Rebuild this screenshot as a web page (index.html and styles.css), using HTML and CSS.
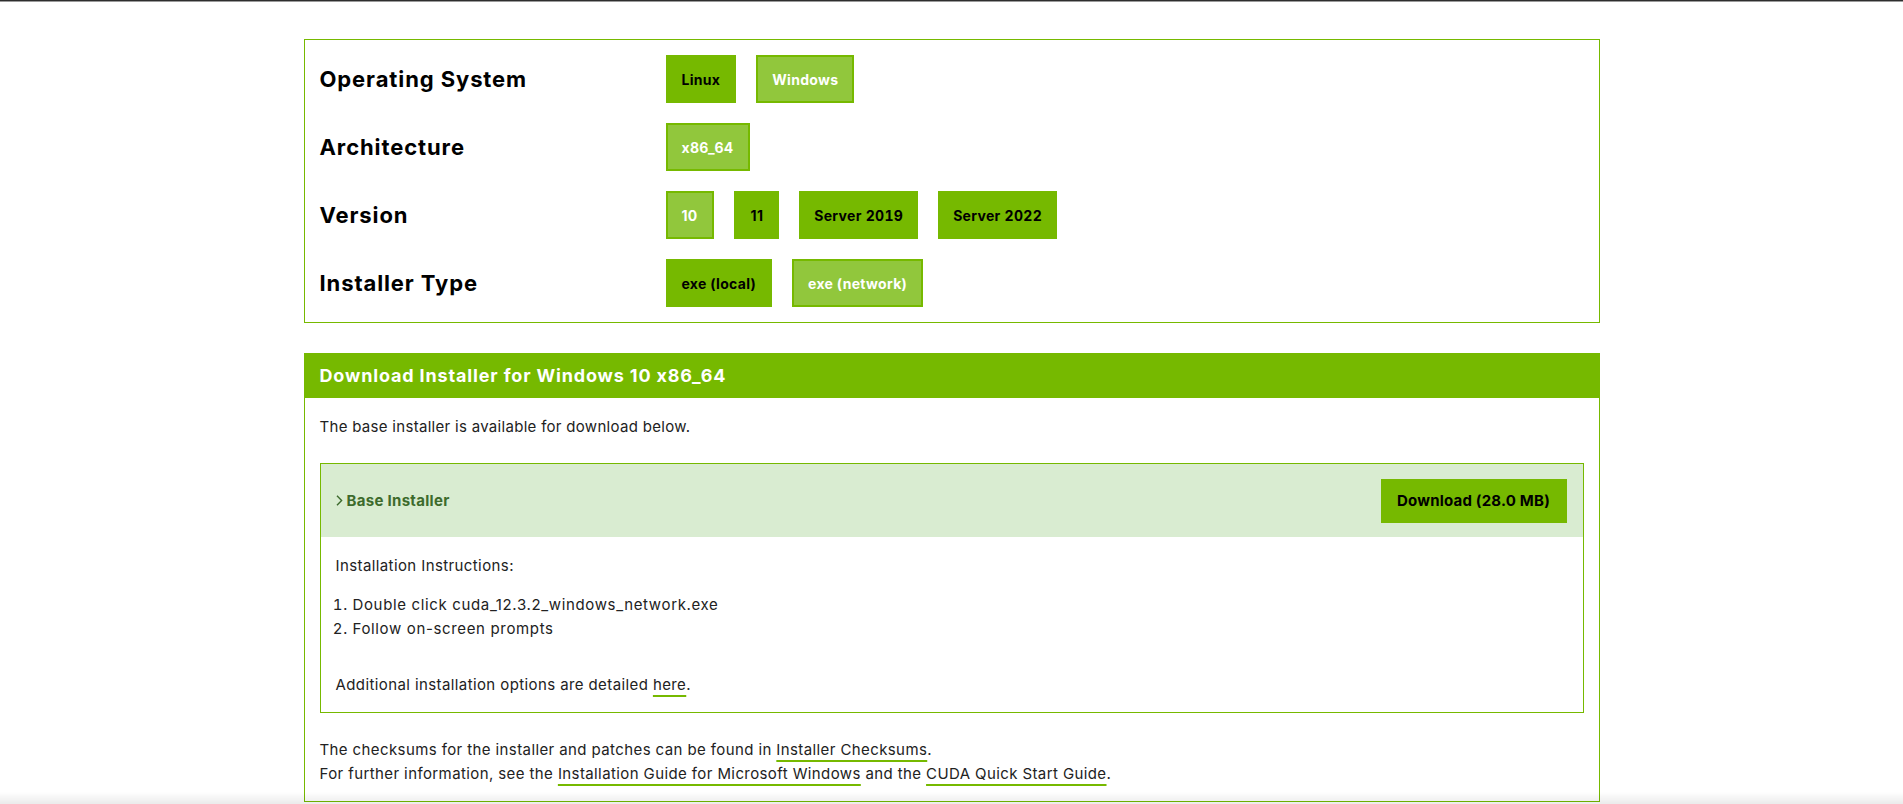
FILE: index.html
```html
<!DOCTYPE html>
<html lang="en">
<head>
<meta charset="utf-8">
<title>CUDA Toolkit Downloads</title>
<link rel="stylesheet" href="styles.css">
</head>
<body>
<div class="topbar"></div>
<main class="page">
  <section class="selector">
    <div class="sel-row">
      <div class="sel-label">Operating System</div>
      <div class="sel-opts">
        <button class="opt">Linux</button>
        <button class="opt active">Windows</button>
      </div>
    </div>
    <div class="sel-row">
      <div class="sel-label">Architecture</div>
      <div class="sel-opts">
        <button class="opt active">x86_64</button>
      </div>
    </div>
    <div class="sel-row">
      <div class="sel-label">Version</div>
      <div class="sel-opts">
        <button class="opt active">10</button>
        <button class="opt opt-11">11</button>
        <button class="opt opt-num">Server 2019</button>
        <button class="opt opt-num">Server 2022</button>
      </div>
    </div>
    <div class="sel-row">
      <div class="sel-label">Installer Type</div>
      <div class="sel-opts">
        <button class="opt">exe (local)</button>
        <button class="opt active">exe (network)</button>
      </div>
    </div>
  </section>

  <section class="download">
    <h2 class="dl-head">Download Installer for Windows 10 x86_64</h2>
    <div class="dl-body">
      <p class="dl-intro">The base installer is available for download below.</p>
      <div class="inst">
        <div class="inst-head">
          <span class="inst-title"><svg class="chev" width="7" height="11" viewBox="0 0 7 11"><path d="M1 0.8 L5.6 5.5 L1 10.2" fill="none" stroke="#3d6b2c" stroke-width="1.4"/></svg>Base Installer</span>
          <a class="dl-btn" href="#">Download (28.0 MB)</a>
        </div>
        <div class="inst-body">
          <p class="inst-label">Installation Instructions:</p>
          <ol class="steps">
            <li>Double click cuda_12.3.2_windows_network.exe</li>
            <li>Follow on-screen prompts</li>
          </ol>
          <p class="inst-more">Additional installation options are detailed <a class="lnk" href="#">here</a>.</p>
        </div>
      </div>
      <p class="notes">The checksums for the installer and patches can be found in <a class="lnk" href="#">Installer Checksums</a>.<br>For further information, see the <a class="lnk" href="#">Installation Guide for Microsoft Windows</a> and the <a class="lnk" href="#">CUDA Quick Start Guide</a>.</p>
    </div>
  </section>
</main>
<div class="bottom-shade"></div>
</body>
</html>
```

FILE: styles.css
```css
* { box-sizing: border-box; }

html, body {
  margin: 0;
  padding: 0;
  background: #ffffff;
  font-family: Inter, Roboto, "Liberation Sans", Arial, sans-serif;
  font-feature-settings: "calt" 0;
  color: #1a1a1a;
  overflow: hidden;
}

.topbar {
  height: 2px;
  background: #2e2e2e;
  border-bottom: 1px solid #9a9a9a;
}

.page {
  width: 1296px;
  margin: 37px auto 0;
}

.selector {
  border: 1px solid #76b900;
  padding: 15px 15px;
  display: flex;
  flex-direction: column;
  gap: 20px;
}

.sel-row {
  display: grid;
  grid-template-columns: 346px 1fr;
  align-items: center;
  height: 48px;
}

.sel-label {
  font-size: 22px;
  font-weight: 700;
  letter-spacing: 0.9px;
  color: #000;
}

.sel-opts {
  display: flex;
  gap: 20px;
}

.opt {
  height: 48px;
  padding: 0 14px;
  border: 2px solid #76b900;
  background: #76b900;
  color: #000;
  font-family: Inter, Roboto, "Liberation Sans", Arial, sans-serif;
  font-feature-settings: "calt" 0;
  font-size: 14px;
  font-weight: 700;
  letter-spacing: 0.3px;
  cursor: pointer;
  margin: 0;
}

.opt-11 {
  padding: 0 14px 0 15px;
}

.opt-num {
  font-feature-settings: "calt" 0, "tnum" 1;
  padding: 0 13px;
}

.opt.active {
  background: #91c73c;
  color: #fff;
}

.download {
  margin-top: 30px;
  border: 1px solid #76b900;
}

.dl-head {
  margin: 0;
  height: 44px;
  background: #76b900;
  color: #fff;
  font-size: 18px;
  font-weight: 700;
  letter-spacing: 0.85px;
  line-height: 44px;
  padding: 0 15px;
}

.dl-body {
  padding: 19px 15px 15px 15px;
}

.dl-intro {
  margin: 0 0 26px;
  font-size: 15px;
  letter-spacing: 0.3px;
  line-height: 20px;
  color: #222;
}

.inst {
  border: 1px solid #76b900;
}

.inst-head {
  background: #d9ecd1;
  height: 73px;
  display: flex;
  align-items: center;
  justify-content: space-between;
  padding: 0 16px 0 15px;
}

.inst-title {
  display: flex;
  align-items: center;
  gap: 4px;
  font-size: 15px;
  font-weight: 700;
  letter-spacing: 0.3px;
  color: #3d6b2c;
}

.chev { display: block; }

.dl-btn {
  display: flex;
  align-items: center;
  justify-content: center;
  width: 186px;
  height: 44px;
  background: #76b900;
  color: #000;
  font-size: 15px;
  font-weight: 700;
  letter-spacing: 0.2px;
  text-decoration: none;
}

.inst-body {
  padding: 17px 15px 15px;
  font-size: 15px;
  letter-spacing: 0.4px;
  line-height: 24px;
  color: #222;
}

.inst-label {
  margin: 0 0 15px;
}

.steps {
  margin: 0 0 32px;
  padding: 0 0 0 17px;
}

.steps li {
  letter-spacing: 0.65px;
}

.inst-more {
  margin: 0;
}

.lnk {
  color: inherit;
  text-decoration: underline;
  text-decoration-color: #76b900;
  text-decoration-thickness: 2px;
  text-underline-offset: 5px;
}

.notes {
  margin: 25px 0 0;
  font-size: 15px;
  letter-spacing: 0.4px;
  line-height: 24px;
  color: #222;
}

.bottom-shade {
  position: fixed;
  left: 0;
  right: 0;
  bottom: 0;
  height: 12px;
  background: linear-gradient(to bottom, rgba(0,0,0,0), rgba(0,0,0,0.08));
  pointer-events: none;
}
```
